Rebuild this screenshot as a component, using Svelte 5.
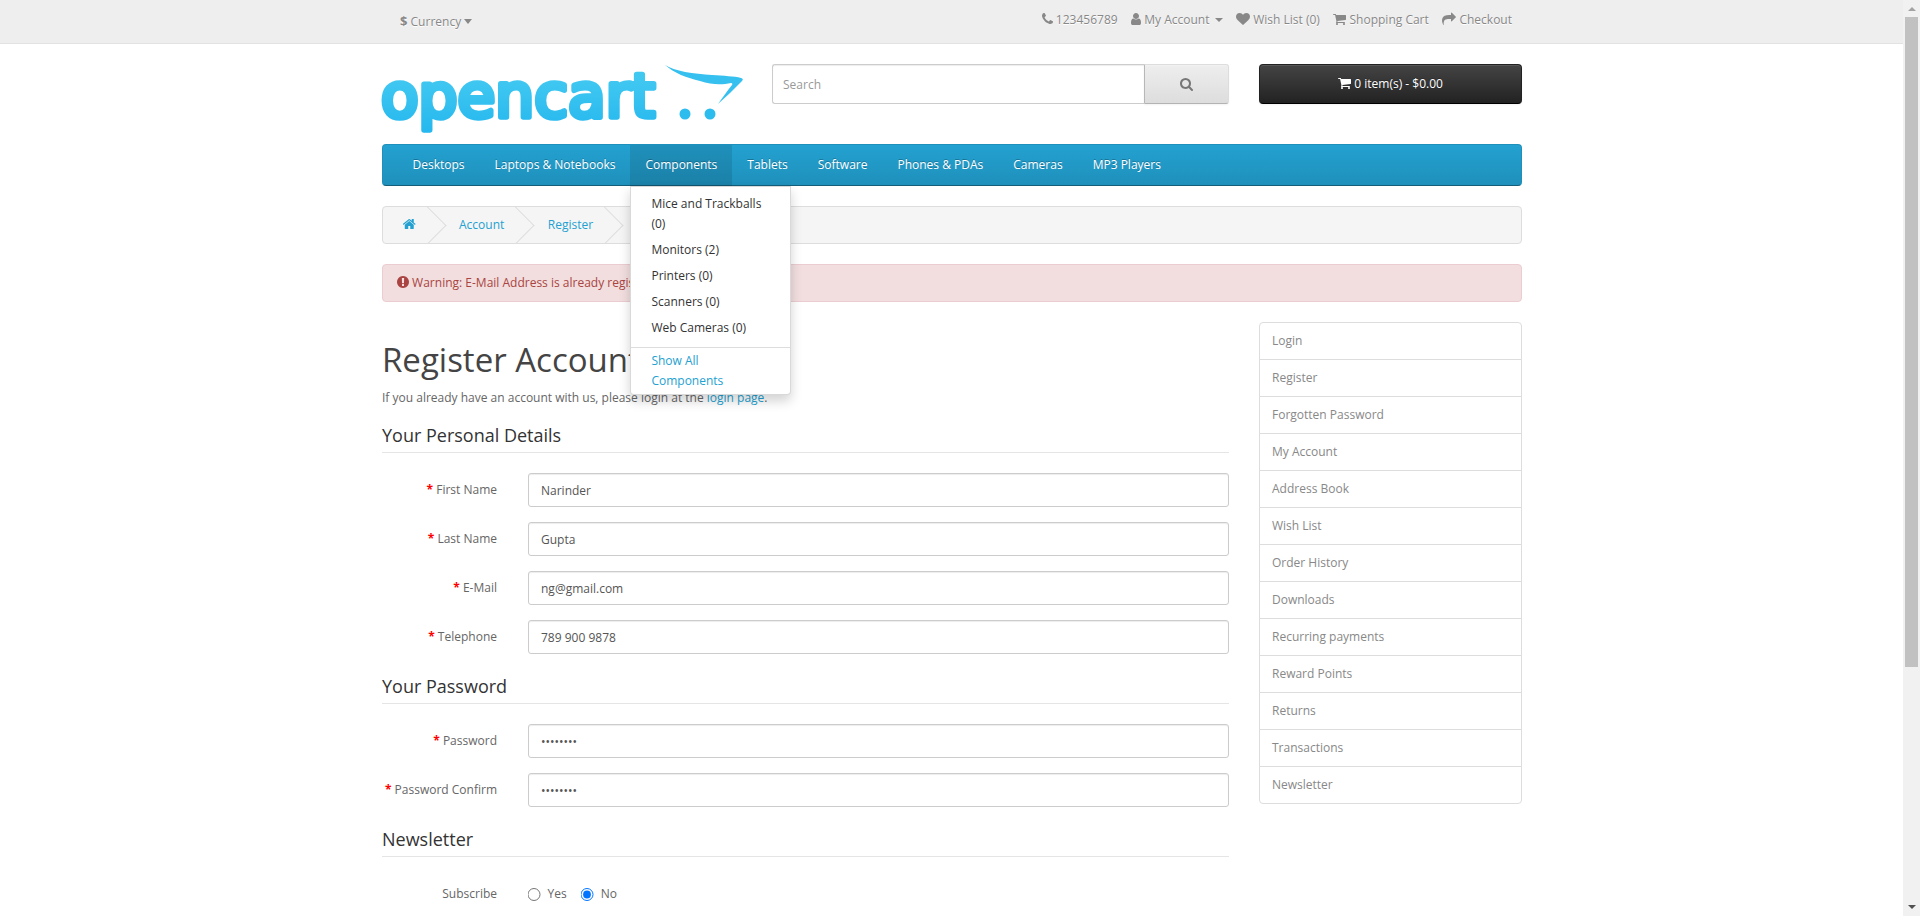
<script>
  const currencyIcon = "$";
  const icons = {
    phone: { x: 192, w: 1408, d: "M1600 1240q0 27-10 70.5t-21 68.5q-21 50-122 106-94 51-186 51-27 0-53-3.5t-57.5-12.5-47-14.5-55.5-20.5-49-18q-98-35-175-83-127-79-264-216t-216-264q-48-77-83-175-3-9-18-49t-20.5-55.5-14.5-47-12.5-57.5-3.5-53q0-92 51-186 56-101 106-122 25-11 68.5-21t70.5-10q14 0 21 3 18 6 53 76 11 19 30 54t35 63.5 31 53.5q3 4 17.5 25t21.5 35.5 7 28.5q0 20-28.5 50t-62 55-62 53-28.5 46q0 9 5 22.5t8.5 20.5 14 24 11.5 19q76 137 174 235t235 174q2 1 19 11.5t24 14 20.5 8.5 22.5 5q18 0 46-28.5t53-62 55-62 50-28.5q14 0 28.5 7t35.5 21.5 25 17.5q25 15 53.5 31t63.5 35 54 30q70 35 76 53 3 7 3 21z" },
    user: { x: 256, w: 1280, d: "M1536 1399q0 109-62.5 187t-150.5 78h-854q-88 0-150.5-78t-62.5-187q0-85 8.5-160.5t31.5-152 58.5-131 94-89 134.5-34.5q131 128 313 128t313-128q76 0 134.5 34.5t94 89 58.5 131 31.5 152 8.5 160.5zm-256-887q0 159-112.5 271.5t-271.5 112.5-271.5-112.5-112.5-271.5 112.5-271.5 271.5-112.5 271.5 112.5 112.5 271.5z" },
    heart: { x: 0, w: 1792, d: "M896 1664q-26 0-44-18l-624-602q-10-8-27.5-26t-55.5-65.5-68-97.5-53.5-121-23.5-138q0-220 127-344t351-124q62 0 126.5 21.5t120 58 95.5 68.5 76 68q36-36 76-68t95.5-68.5 120-58 126.5-21.5q224 0 351 124t127 344q0 221-229 450l-623 600q-18 18-44 18z" },
    cart: { x: 64, w: 1664, d: "M704 1536q0 52-38 90t-90 38-90-38-38-90 38-90 90-38 90 38 38 90zm896 0q0 52-38 90t-90 38-90-38-38-90 38-90 90-38 90 38 38 90zm128-1088v512q0 24-16.5 42.5t-40.5 21.5l-1044 122q13 60 13 70 0 16-24 64h920q26 0 45 19t19 45-19 45-45 19h-1024q-26 0-45-19t-19-45q0-11 8-31.5t16-36 21.5-40 15.5-29.5l-177-823h-204q-26 0-45-19t-19-45 19-45 45-19h256q16 0 28.5 6.5t19.5 15.5 13 24.5 8 26 5.5 29.5 4.5 26h1201q26 0 45 19t19 45z" },
    share: { x: 0, w: 1792, d: "M1792 640q0 26-19 45l-512 512q-19 19-45 19t-45-19-19-45v-256h-224q-98 0-175.5 6t-154 21.5-133 42.5-105.5 69.5-80 101-48.5 138.5-17.5 181q0 55 5 123 0 6 2.5 23.5t2.5 26.5q0 15-8.5 25t-23.5 10q-16 0-28-17-7-9-13-22t-13.5-30-10.5-24q-127-285-127-451 0-199 53-333 162-403 875-403h224v-256q0-26 19-45t45-19 45 19l512 512q19 19 19 45z" },
    search: { x: 64, w: 1664, d: "M1216 832q0-185-131.5-316.5t-316.5-131.5-316.5 131.5-131.5 316.5 131.5 316.5 316.5 131.5 316.5-131.5 131.5-316.5zm512 832q0 52-38 90t-90 38q-54 0-90-38l-343-342q-179 124-399 124-143 0-273.5-55.5t-225-150-150-225-55.5-273.5 55.5-273.5 150-225 225-150 273.5-55.5 273.5 55.5 225 150 150 225 55.5 273.5q0 220-124 399l343 343q37 37 37 90z" },
    home: { x: 96, w: 1600, d: "M1472 992v480q0 26-19 45t-45 19h-384v-384h-256v384h-384q-26 0-45-19t-19-45v-480q0-1 .5-3t.5-3l575-474 575 474q1 2 1 6zm223-69l-62 74q-8 9-21 11h-3q-13 0-21-7l-692-577-692 577q-12 8-24 7-13-2-21-11l-62-74q-8-10-7-23.5t11-21.5l719-599q32-26 76-26t76 26l244 204v-195q0-14 9-23t23-9h192q14 0 23 9t9 23v408l219 182q10 8 11 21.5t-7 23.5z" },
    warn: { x: 128, w: 1536, d: "M896 128q209 0 385.5 103t279.5 279.5 103 385.5-103 385.5-279.5 279.5-385.5 103-385.5-103-279.5-279.5-103-385.5 103-385.5 279.5-279.5 385.5-103zm128 1247v-190q0-14-9-23.5t-22-9.5h-192q-13 0-23 10t-10 23v190q0 13 10 23t23 10h192q13 0 22-9.5t9-23.5zm-2-344l18-621q0-12-10-18-10-8-24-8h-220q-14 0-24 8-10 6-10 18l17 621q0 10 10 17.5t24 7.5h185q14 0 23.5-7.5t10.5-17.5z" }
  };

  const menu = ["Desktops", "Laptops & Notebooks", "Components", "Tablets", "Software", "Phones & PDAs", "Cameras", "MP3 Players"];
  const submenu = ["Mice and Trackballs (0)", "Monitors (2)", "Printers (0)", "Scanners (0)", "Web Cameras (0)"];
  const sidebar = ["Login", "Register", "Forgotten Password", "My Account", "Address Book", "Wish List", "Order History", "Downloads", "Recurring payments", "Reward Points", "Returns", "Transactions", "Newsletter"];
  const personal = [
    { label: "First Name", value: "Narinder", type: "text" },
    { label: "Last Name", value: "Gupta", type: "text" },
    { label: "E-Mail", value: "ng@gmail.com", type: "text" },
    { label: "Telephone", value: "789 900 9878", type: "text" }
  ];
  const password = [
    { label: "Password", value: "12345678", type: "password" },
    { label: "Password Confirm", value: "12345678", type: "password" }
  ];
</script>

{#snippet fa(name)}
  <svg class="fa" width={(14 * icons[name].w) / 1792} height="14" viewBox="{icons[name].x} 0 {icons[name].w} 1792" aria-hidden="true"><path fill="currentColor" d={icons[name].d} /></svg>
{/snippet}

{#snippet field(f)}
  <div class="form-group">
    <label class="control-label" for={f.label}><span class="req">*</span> {f.label}</label>
    <input class="form-control" id={f.label} type={f.type} value={f.value} readonly />
  </div>
{/snippet}

<div class="window">
  <div class="page">
    <nav id="top">
      <div class="container top-row">
        <button type="button" class="currency"><strong>{currencyIcon}</strong> Currency <span class="caret-lg"></span></button>
        <ul class="top-links">
          <li>{@render fa("phone")} <span>123456789</span></li>
          <li>{@render fa("user")} <span>My Account</span> <span class="caret"></span></li>
          <li>{@render fa("heart")} <span>Wish List (0)</span></li>
          <li>{@render fa("cart")} <span>Shopping Cart</span></li>
          <li>{@render fa("share")} <span>Checkout</span></li>
        </ul>
      </div>
    </nav>

    <header class="container header">
      <div class="logo" aria-label="OpenCart">
        <svg width="364" height="76" viewBox="-2 -4 364 76">
          <defs>
            <linearGradient id="logoBlue" gradientUnits="userSpaceOnUse" x1="0" y1="14" x2="0" y2="70">
              <stop offset="0" stop-color="#41c8f1" />
              <stop offset="1" stop-color="#25b7ee" />
            </linearGradient>
          </defs>
          <text class="logo-text" x="-1" y="52.5" textLength="274" lengthAdjust="spacingAndGlyphs">opencart</text>
          <path d="M283 1C292 7 312 10 330 11C342 12 352 12 359 14Q362 15 360 17C352 25 344 33 336 40C341 33 346 26 350 21Q351 19 349 19C340 21 330 21 318 17C305 14 292 9 283 1Z" fill="#35c0ef" />
          <circle cx="303" cy="50" r="5.5" fill="#2dbcee" />
          <circle cx="328" cy="50" r="5.5" fill="#2dbcee" />
        </svg>
      </div>
      <div class="search">
        <input type="text" placeholder="Search" />
        <button type="button" aria-label="Search">{@render fa("search")}</button>
      </div>
      <button type="button" class="cart">{@render fa("cart")} <span>0 item(s) - $0.00</span></button>
    </header>

    <div class="container">
      <nav id="menu">
        <ul>
          {#each menu as item}
            <li class:open={item === "Components"}>
              <a href="#top">{item}</a>
              {#if item === "Components"}
                <div class="dropdown">
                  {#each submenu as sub}
                    <a class="sub" href="#top">{sub}</a>
                  {/each}
                  <a class="see-all" href="#top">Show All Components</a>
                </div>
              {/if}
            </li>
          {/each}
        </ul>
      </nav>

      <ul class="breadcrumb">
        <li><a href="#top" aria-label="Home">{@render fa("home")}</a></li>
        <li><a href="#top">Account</a></li>
        <li><a href="#top">Register</a></li>
        <li><a href="#top">&nbsp;</a></li>
      </ul>

      <div class="alert">{@render fa("warn")} Warning: E-Mail Address is already registered!</div>

      <div class="columns">
        <main class="content">
          <h1>Register Account</h1>
          <p>If you already have an account with us, please login at the <a href="#top">login page</a>.</p>
          <fieldset>
            <legend>Your Personal Details</legend>
            {#each personal as f}
              {@render field(f)}
            {/each}
          </fieldset>
          <fieldset>
            <legend>Your Password</legend>
            {#each password as f}
              {@render field(f)}
            {/each}
          </fieldset>
          <fieldset>
            <legend>Newsletter</legend>
            <div class="form-group radio-row">
              <span class="control-label">Subscribe</span>
              <div class="radios">
                <label><input type="radio" name="newsletter" /> Yes</label>
                <label><input type="radio" name="newsletter" checked /> No</label>
              </div>
            </div>
          </fieldset>
        </main>
        <aside class="list-group">
          {#each sidebar as item}
            <a href="#top">{item}</a>
          {/each}
        </aside>
      </div>
    </div>
  </div>

  <div class="scrollbar">
    <span class="arrow up"></span>
    <span class="thumb"></span>
    <span class="arrow down"></span>
  </div>
</div>

<style>
  :global(body) {
    margin: 0;
    font-family: "Open Sans", sans-serif;
    font-size: 12px;
    line-height: 20px;
    color: #666;
    background: #fff;
  }

  * {
    box-sizing: border-box;
  }

  a {
    color: #23a1d1;
    text-decoration: none;
  }

  ul {
    list-style: none;
    margin: 0;
    padding: 0;
  }

  .window {
    display: flex;
    height: 916px;
    overflow: hidden;
  }

  .page {
    flex: 1;
    min-width: 0;
  }

  .container {
    width: 1140px;
    margin: 0 0 0 382px;
  }

  .fa {
    display: inline-block;
    vertical-align: -2px;
  }

  /* top bar */
  #top {
    height: 44px;
    background: #eee;
    border-bottom: 1px solid #e2e2e2;
    margin-bottom: 20px;
    color: #888;
    text-shadow: 0 1px 0 #fff;
  }

  .top-row {
    display: flex;
    justify-content: space-between;
    height: 43px;
  }

  .currency {
    border: 0;
    background: none;
    padding: 0 0 0 18px;
    height: 43px;
    font: inherit;
    color: #888;
    text-shadow: inherit;
  }

  .currency strong {
    font-size: 13px;
  }

  .caret-lg {
    display: inline-block;
    border-top: 5px solid #888;
    border-left: 4.5px solid transparent;
    border-right: 4.5px solid transparent;
    vertical-align: 2px;
  }

  .top-links {
    display: flex;
    gap: 13.5px;
    align-items: center;
    height: 39px;
    padding-right: 10px;
  }

  .caret {
    display: inline-block;
    border-top: 4px solid #888;
    border-left: 4px solid transparent;
    border-right: 4px solid transparent;
    vertical-align: 2px;
    margin-left: 2px;
  }

  /* header */
  .header {
    display: flex;
    align-items: flex-start;
    height: 80px;
  }

  .logo {
    width: 390px;
    height: 72px;
    flex-shrink: 0;
  }

  .logo svg {
    display: block;
    margin: -4px 0 0 -2px;
  }

  .logo-text {
    font-family: "DejaVu Sans", sans-serif;
    font-size: 60px;
    fill: url(#logoBlue);
    stroke: url(#logoBlue);
    stroke-width: 5.5px;
    stroke-linejoin: round;
    stroke-linecap: round;
  }

  .search {
    display: flex;
    width: 457px;
    height: 40px;
    flex-shrink: 0;
  }

  .search input {
    flex: 1;
    min-width: 0;
    height: 40px;
    padding: 10px;
    font: inherit;
    color: #555;
    border: 1px solid #ccc;
    border-right: 0;
    border-radius: 3px 0 0 3px;
    box-shadow: inset 0 1px 1px rgba(0, 0, 0, 0.075);
    outline: none;
  }

  .search input::placeholder {
    color: #999;
  }

  .search button {
    width: 85px;
    height: 40px;
    color: #777;
    background: linear-gradient(to bottom, #eee, #ddd);
    border: 1px solid;
    border-color: #ddd #ddd #b3b3b3 #b7b7b7;
    border-radius: 0 3px 3px 0;
    text-shadow: 0 1px 0 rgba(255, 255, 255, 0.5);
    box-shadow: inset 0 1px 0 rgba(255, 255, 255, 0.2), 0 1px 2px rgba(0, 0, 0, 0.05);
  }

  .cart {
    width: 263px;
    height: 40px;
    margin-left: 30px;
    color: #fff;
    font: inherit;
    background: linear-gradient(to bottom, #444, #222);
    border: 1px solid;
    border-color: #222 #222 #000;
    border-radius: 4px;
    text-shadow: 0 -1px 0 rgba(0, 0, 0, 0.25);
    box-shadow: inset 0 1px 0 rgba(255, 255, 255, 0.1), 0 1px 2px rgba(0, 0, 0, 0.05);
  }

  /* menu */
  #menu {
    height: 42px;
    margin-bottom: 20px;
    background: linear-gradient(to bottom, #23a1d1, #1f90bb);
    border: 1px solid;
    border-color: #1f90bb #1f90bb #145e7a;
    border-radius: 4px;
  }

  #menu ul {
    display: flex;
    padding-left: 14.5px;
    height: 40px;
  }

  #menu li {
    position: relative;
  }

  #menu li > a {
    display: block;
    height: 40px;
    padding: 10px 15px;
    color: #fff;
    text-shadow: 0 -1px 0 rgba(0, 0, 0, 0.25);
  }

  #menu li.open > a {
    background: rgba(0, 0, 0, 0.1);
    height: 41px;
  }

  .dropdown {
    position: absolute;
    top: 41px;
    left: 0;
    width: 161px;
    z-index: 5;
    padding-top: 4px;
    background: #fff;
    border: 1px solid rgba(0, 0, 0, 0.15);
    border-radius: 0 0 4px 4px;
    box-shadow: 0 6px 12px rgba(0, 0, 0, 0.175);
  }

  .dropdown a {
    display: block;
    padding: 3px 20px;
    color: #333;
  }

  .dropdown a.see-all {
    margin-top: 6px;
    padding: 3px 20px 3px;
    color: #23a1d1;
    border-top: 1px solid #ddd;
  }

  /* breadcrumb */
  .breadcrumb {
    display: flex;
    gap: 3.5px;
    height: 38px;
    margin-bottom: 20px;
    padding: 8px 0;
    background: #f5f5f5;
    border: 1px solid #ddd;
    border-radius: 4px;
    overflow: hidden;
  }

  .breadcrumb li {
    position: relative;
    padding: 0 20px;
    white-space: nowrap;
  }

  .breadcrumb li::after {
    content: "";
    position: absolute;
    top: -3px;
    right: -5px;
    width: 26px;
    height: 26px;
    border-right: 1px solid #ddd;
    border-bottom: 1px solid #ddd;
    transform: rotate(-45deg);
  }

  /* alert */
  .alert {
    height: 38px;
    margin-bottom: 20px;
    padding: 8px 14px;
    color: #a94442;
    background: #f2dede;
    border: 1px solid #ebccd1;
    border-radius: 4px;
  }

  /* columns */
  .columns {
    display: flex;
    gap: 30px;
  }

  .content {
    width: 847px;
    flex-shrink: 0;
  }

  h1 {
    margin: 20px 0 10px;
    font-size: 33px;
    font-weight: 400;
    line-height: 36px;
    color: #444;
  }

  p {
    margin: 0 0 10px;
  }

  fieldset {
    margin: 0;
    padding: 0 0 15px;
    border: 0;
    min-width: 0;
  }

  legend {
    display: block;
    width: 100%;
    padding: 7px 0;
    margin-bottom: 0;
    font-size: 18px;
    line-height: 20px;
    color: #333;
    border-bottom: 1px solid #e5e5e5;
  }

  .form-group {
    display: flex;
    align-items: center;
    padding-top: 15px;
  }

  .form-group:first-of-type {
    padding-top: 20px;
  }

  .control-label {
    width: 115px;
    margin-right: 31px;
    text-align: right;
    flex-shrink: 0;
  }

  .req {
    color: #f00;
    font-weight: 700;
  }

  .form-control {
    flex: 1;
    min-width: 0;
    height: 34px;
    padding: 6px 12px;
    font: inherit;
    color: #555;
    background: #fff;
    border: 1px solid #ccc;
    border-radius: 3px;
    box-shadow: inset 0 1px 1px rgba(0, 0, 0, 0.075);
    outline: none;
  }

  .radio-row {
    min-height: 54px;
  }

  .radios {
    display: flex;
    gap: 14px;
    transform: translateX(-0.5px);
  }

  .radios label {
    display: flex;
    align-items: center;
    gap: 7px;
  }

  .radios input {
    margin: 0;
    width: 13px;
    height: 13px;
  }

  /* sidebar */
  .list-group {
    width: 263px;
    display: flex;
    flex-direction: column;
    flex-shrink: 0;
  }

  .list-group a {
    display: block;
    height: 38px;
    margin-bottom: -1px;
    padding: 8px 12px;
    color: #888;
    background: #fff;
    border: 1px solid #ddd;
    text-shadow: 0 1px 0 #fff;
  }

  .list-group a:first-child {
    border-radius: 4px 4px 0 0;
  }

  .list-group a:last-child {
    border-radius: 0 0 4px 4px;
  }

  /* fake window scrollbar */
  .scrollbar {
    width: 17px;
    height: 916px;
    flex-shrink: 0;
    display: flex;
    flex-direction: column;
    align-items: center;
    background: #f1f1f1;
  }

  .arrow {
    display: block;
    height: 17px;
    width: 17px;
    flex-shrink: 0;
    position: relative;
  }

  .arrow::after {
    content: "";
    position: absolute;
    left: 5px;
    border-left: 4px solid transparent;
    border-right: 4px solid transparent;
  }

  .arrow.up::after {
    top: 7px;
    border-bottom: 4px solid #a3a3a3;
  }

  .arrow.down::after {
    top: 6px;
    border-top: 4px solid #505050;
  }

  .thumb {
    display: block;
    width: 13px;
    height: 650px;
    background: #c1c1c1;
  }

  .arrow.down {
    margin-top: auto;
  }
</style>
